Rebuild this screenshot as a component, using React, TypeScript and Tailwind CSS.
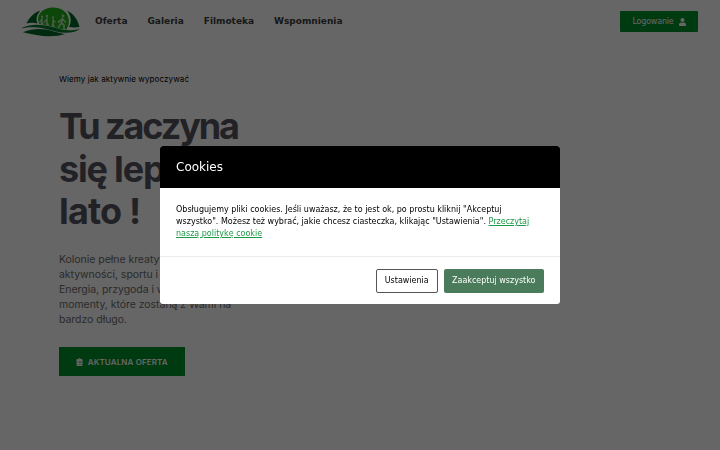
import { FaUser, FaClipboardList } from "react-icons/fa";

const links = ["Oferta", "Galeria", "Filmoteka", "Wspomnienia"];

function Logo() {
  return (
    <svg viewBox="0 0 60 30" className="h-[30px] w-[60px]">
      <path d="M19.500 3.500C12 6 8 11 5.500 16.500C9 15.500 13 15.500 16.500 16.500C14.500 12 16 7 19.500 3.500Z" fill="#006a28" />
      <path d="M46 3.500C53 7 57 13 58.500 20C55 20.500 52 20.500 48 20C51 14 50 9 46 3.500Z" fill="#006a28" />
      <path d="M18.500 17C14 8 22 .5 32.500 .5C45 .5 52 12 45.500 22.500C37 22 28 18.500 18.500 17Z" fill="#1fae14" />
      <g stroke="#e8f5e8" strokeWidth="1.4" strokeLinecap="round" strokeLinejoin="round" fill="none" opacity="0.75">
        <path d="M21 11v4l-1 3M21 12l-2 3M21 15l1.500 3" />
        <path d="M26 11v5l-1 3M26 12l-2.500 3M26 15l1.500 4" />
        <path d="M32 12v4l-1 4M32 13l2 2M32 16l1 4" />
        <path d="M41.500 11l-1 5-3 4M41.500 12l-4 3M41.500 12l3 3M40.500 16l2.500 2v5" strokeWidth="1.700" />
      </g>
      <g fill="#e8f5e8" opacity="0.75">
        <circle cx="21" cy="9.500" r="1.100" />
        <circle cx="26" cy="9" r="1.200" />
        <circle cx="32" cy="10.300" r="1.100" />
        <circle cx="42" cy="8.800" r="1.400" />
      </g>
      <path d="M0 21.500C8 16.500 20 17 29 19.500C38 22 47 25 59 22C53 26 44 27 35 24.500C24 21.500 13 18.500 0 21.500Z" fill="#007a28" />
      <path d="M2 25.200C13 20.500 24 22 32 24.200C36 25.300 40 26.500 44 27C32 31 16 29 2 25.200Z" fill="#006a28" />
    </svg>
  );
}

function Header() {
  return (
    <header className="flex h-[43px] items-center pr-[22px] pl-[21px]">
      <Logo />
      <nav className="ml-3.5 flex gap-5 pt-px text-[9px] font-bold text-[#3c3c3c]">
        {links.map((link) => (
          <a key={link} href="#">{link}</a>
        ))}
      </nav>
      <button className="ml-auto flex h-[21px] w-[78px] items-center justify-center gap-[5px] rounded-[1px] bg-[#00912a] text-[8px] tracking-[-0.2px] text-white">
        Logowanie
        <FaUser className="h-2 w-[7px]" />
      </button>
    </header>
  );
}

function Hero() {
  return (
    <main className="px-[59px] pt-[30px] font-['Inter',sans-serif]">
      <p className="text-[8px] leading-3 tracking-[0.1px] text-black">Wiemy jak aktywnie wypoczywać</p>
      <h1 className="mt-5 flex w-[200px] flex-col text-[36px] leading-[42.500px] font-bold whitespace-nowrap text-[#55555f]">
        <span className="tracking-[-2.100px]">Tu zaczyna</span>
        <span className="tracking-[-1.200px]">się lepsze</span>
        <span className="tracking-[-0.800px]">lato !</span>
      </h1>
      <p className="mt-[19px] text-[10.500px] leading-[15px] tracking-[-0.040px] whitespace-nowrap text-[#6c6c6c]">
        Kolonie pełne kreatywności,<br />aktywności, sportu i zabawy.<br />Energia, przygoda i wspólne<br />momenty, które zostaną z Wami na<br />bardzo długo.
      </p>
      <button className="mt-[20.500px] flex h-[29px] w-[125.500px] items-center justify-center gap-[5px] bg-[#00912a] text-[8px] font-semibold tracking-[0.140px] whitespace-nowrap text-white">
        <FaClipboardList className="h-2 w-[7px]" />
        AKTUALNA OFERTA
      </button>
    </main>
  );
}

function CookieDialog() {
  return (
    <div className="fixed inset-0 flex items-center justify-center bg-black/60">
      <div role="dialog" className="flex h-[158px] w-[400px] flex-col overflow-hidden rounded-[3px] bg-white">
        <h2 className="flex h-[42px] items-center bg-black px-4 text-[12px] text-white">Cookies</h2>
        <div className="h-[68px] px-4 pt-4 text-[8px] leading-3 text-black">
          Obsługujemy pliki cookies. Jeśli uważasz, że to jest ok, po prostu kliknij "Akceptuj
          wszystko". Możesz też wybrać, jakie chcesz ciasteczka, klikając "Ustawienia".{" "}
          <a href="#" className="text-[#1c9a48] underline">Przeczytaj naszą politykę cookie</a>
        </div>
        <div className="flex flex-1 items-center justify-end gap-1.5 border-t border-[#ececec] px-4 text-[8px]">
          <button className="h-6 w-[61.500px] rounded-xs border border-[#555] text-black">Ustawienia</button>
          <button className="h-6 w-[100.500px] rounded-xs bg-[#4a7c5c] text-white">Zaakceptuj wszystko</button>
        </div>
      </div>
    </div>
  );
}

export default function App() {
  return (
    <div className="h-screen overflow-hidden bg-white font-['DejaVu_Sans',sans-serif]">
      <Header />
      <Hero />
      <CookieDialog />
    </div>
  );
}
